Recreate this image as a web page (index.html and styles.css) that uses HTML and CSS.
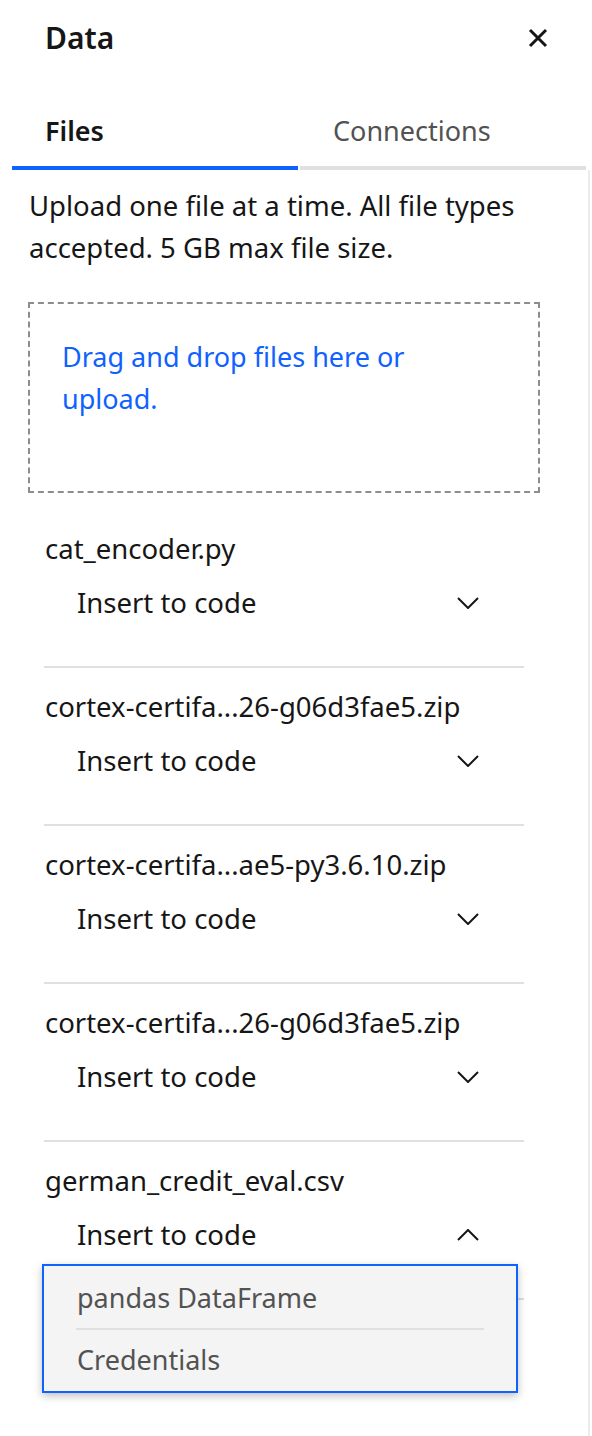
FILE: index.html
```html
<!DOCTYPE html>
<html lang="en">
<head>
<meta charset="utf-8">
<title>Data</title>
<link rel="stylesheet" href="styles.css">
</head>
<body>
<div class="panel">
  <header class="head">
    <h1 class="title">Data</h1>
    <button class="close" aria-label="Close">
      <svg width="20" height="20" viewBox="0 0 20 20"><path d="M2 2 L18 18 M18 2 L2 18" stroke="#161616" stroke-width="3" fill="none"/></svg>
    </button>
  </header>
  <nav class="tabs">
    <div class="tab active">Files</div>
    <div class="tab">Connections</div>
  </nav>
  <main class="body">
    <p class="desc">Upload one file at a time. All file types accepted. 5 GB max file size.</p>
    <div class="drop"><span class="drop-text">Drag and drop files here or upload.</span></div>
    <ul class="files">
      <li class="file">
        <div class="name">cat_encoder.py</div>
        <div class="insert"><span>Insert to code</span><svg class="chev" width="22" height="12" viewBox="0 0 22 12"><path d="M1 1 L11 11 L21 1" stroke="#161616" stroke-width="2" fill="none"/></svg></div>
      </li>
      <li class="file">
        <div class="name">cortex-certifa...26-g06d3fae5.zip</div>
        <div class="insert"><span>Insert to code</span><svg class="chev" width="22" height="12" viewBox="0 0 22 12"><path d="M1 1 L11 11 L21 1" stroke="#161616" stroke-width="2" fill="none"/></svg></div>
      </li>
      <li class="file">
        <div class="name">cortex-certifa...ae5-py3.6.10.zip</div>
        <div class="insert"><span>Insert to code</span><svg class="chev" width="22" height="12" viewBox="0 0 22 12"><path d="M1 1 L11 11 L21 1" stroke="#161616" stroke-width="2" fill="none"/></svg></div>
      </li>
      <li class="file">
        <div class="name">cortex-certifa...26-g06d3fae5.zip</div>
        <div class="insert"><span>Insert to code</span><svg class="chev" width="22" height="12" viewBox="0 0 22 12"><path d="M1 1 L11 11 L21 1" stroke="#161616" stroke-width="2" fill="none"/></svg></div>
      </li>
      <li class="file">
        <div class="name">german_credit_eval.csv</div>
        <div class="insert open"><span>Insert to code</span><svg class="chev" width="22" height="12" viewBox="0 0 22 12"><path d="M1 11 L11 1 L21 11" stroke="#161616" stroke-width="2" fill="none"/></svg>
          <ul class="menu">
            <li class="menu-item">pandas DataFrame</li>
            <li class="menu-item">Credentials</li>
          </ul>
        </div>
      </li>
    </ul>
  </main>
</div>
</body>
</html>
```
FILE: styles.css
```css
* { box-sizing: border-box; }
html, body { margin: 0; padding: 0; background: #fff; }
body {
  font-family: "Noto Sans", "Liberation Sans", sans-serif;
  color: #161616;
  width: 592px;
  height: 1436px;
  overflow: hidden;
}
.panel { width: 592px; }
.head {
  height: 76px;
  display: flex;
  align-items: center;
  justify-content: space-between;
  padding: 0 44px 0 45px;
}
.title {
  margin: 0;
  font-size: 30px;
  font-weight: 600;
  line-height: 36px;
}
.close {
  border: 0;
  background: none;
  padding: 0;
  width: 20px;
  height: 20px;
  display: flex;
}
.tabs {
  display: flex;
  gap: 2px;
  padding: 0 6px 0 12px;
  margin-top: 18px;
}
.tab {
  flex: 1;
  height: 76px;
  padding: 21px 0 0 33px;
  font-size: 27px;
  line-height: 32px;
  color: #525252;
  border-bottom: 4px solid #e0e0e0;
}
.tab.active {
  color: #161616;
  font-weight: 600;
  border-bottom-color: #0f62fe;
}
.body {
  width: 590px;
  border-right: 2px solid #ececec;
  padding: 15px 0 0 0;
  min-height: 1266px;
}
.desc {
  margin: 0 0 0 29px;
  width: 505px;
  font-size: 27.5px;
  line-height: 42px;
}
.drop {
  margin: 33px 0 0 28px;
  width: 512px;
  height: 191px;
  border: 2px dashed #8d8d8d;
  padding: 32px 90px 0 32px;
  font-size: 27px;
  line-height: 42px;
  color: #0f62fe;
}
.files {
  list-style: none;
  margin: 17px 0 0 44px;
  padding: 0;
  width: 480px;
}
.file {
  padding: 23px 0 47px 1px;
  border-bottom: 2px solid #e0e0e0;
}
.name {
  font-size: 27.5px;
  line-height: 32px;
}
.insert {
  position: relative;
  margin-top: 22px;
  height: 32px;
  display: flex;
  align-items: center;
  justify-content: space-between;
  padding: 0 45px 0 32px;
  font-size: 27.5px;
  line-height: 32px;
}
.chev { display: block; }
.menu {
  position: absolute;
  top: 45px;
  left: -3px;
  width: 476px;
  margin: 0;
  padding: 0;
  list-style: none;
  background: #f4f4f4;
  border: 2px solid #0f62fe;
  box-shadow: 0 3px 8px rgba(0,0,0,0.25);
  z-index: 2;
}
.menu-item {
  margin: 0 32px;
  padding-left: 1px;
  font-size: 27px;
  line-height: 32px;
  color: #525252;
}
.menu-item:first-child {
  padding-top: 16px;
  height: 64px;
  border-bottom: 2px solid #e0e0e0;
}
.menu-item:last-child {
  padding-top: 14px;
  height: 61px;
}
```
